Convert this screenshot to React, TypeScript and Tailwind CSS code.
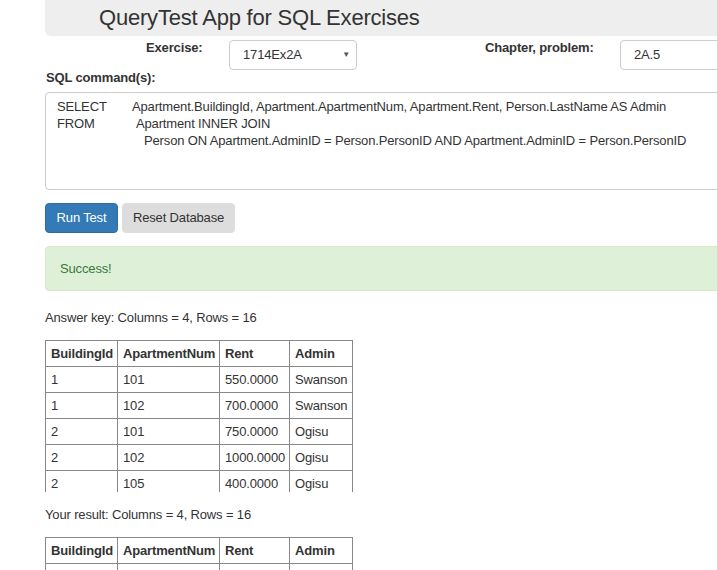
import React from 'react'

type Row = [string, string, string, string]

const answerRows: Row[] = [
  ['1', '101', '550.0000', 'Swanson'],
  ['1', '102', '700.0000', 'Swanson'],
  ['2', '101', '750.0000', 'Ogisu'],
  ['2', '102', '1000.0000', 'Ogisu'],
  ['2', '105', '400.0000', 'Ogisu'],
  ['2', '201', '800.0000', 'Ogisu'],
]

const headers = ['BuildingId', 'ApartmentNum', 'Rent', 'Admin']

function ResultTable({ rows, height }: { rows: Row[]; height: string }) {
  return (
    <div className={`overflow-hidden ${height}`}>
      <table className="border-collapse table-fixed w-[307px] leading-[16px]">
        <colgroup>
          <col className="w-[72px]" />
          <col className="w-[102px]" />
          <col className="w-[70px]" />
          <col className="w-[63px]" />
        </colgroup>
        <thead>
          <tr className="h-[26px]">
            {headers.map((h) => (
              <th key={h} className="border border-[#888] px-[5px] text-left font-bold whitespace-nowrap">
                {h}
              </th>
            ))}
          </tr>
        </thead>
        <tbody>
          {rows.map((r, i) => (
            <tr key={i} className="h-[26px]">
              {r.map((c, j) => (
                <td key={j} className="border border-[#888] px-[5px] whitespace-nowrap">
                  {c}
                </td>
              ))}
            </tr>
          ))}
        </tbody>
      </table>
    </div>
  )
}

export default function App() {
  return (
    <div
      className="w-[717px] h-[570px] overflow-hidden bg-white text-[#333] text-[13px] tracking-[-0.15px]"
      style={{ fontFamily: '"Liberation Sans", Arial, sans-serif' }}
    >
      <div className="w-[780px] pl-[45px]">
        <div className="h-[36px] bg-[#eee] rounded-bl-[6px] pl-[54px] flex items-center">
          <h1 className="text-[22px] leading-none font-normal tracking-[-0.2px]">QueryTest App for SQL Exercises</h1>
        </div>

        <div className="flex items-start mt-[4px] h-[30px]">
          <label className="ml-[101px] w-[83px] font-bold leading-[16px]">Exercise:</label>
          <div className="w-[128px] h-[30px] border border-[#ccc] rounded-[4px] flex items-center justify-between pl-[13px] pr-[6px]">
            <span>1714Ex2A</span>
            <span className="text-[8px] text-[#555]">▼</span>
          </div>
          <label className="ml-[128px] w-[135px] font-bold leading-[16px]">Chapter, problem:</label>
          <div className="w-[140px] h-[30px] border border-[#ccc] rounded-[4px] flex items-center pl-[13px]">
            <span>2A.5</span>
          </div>
        </div>

        <div className="font-bold leading-5 mt-[-2px] pl-[1px]">SQL command(s):</div>

        <div className="mt-[4px] h-[98px] border border-[#ccc] rounded-[4px] pt-[5px] pl-[11px] leading-[17px]">
          <div className="whitespace-nowrap">
            <span className="inline-block w-[75px]">SELECT</span>
            Apartment.BuildingId, Apartment.ApartmentNum, Apartment.Rent, Person.LastName AS Admin
          </div>
          <div className="whitespace-nowrap">
            <span className="inline-block w-[79px]">FROM</span>
            Apartment INNER JOIN
          </div>
          <div className="whitespace-nowrap pl-[87px]">
            Person ON Apartment.AdminID = Person.PersonID AND Apartment.AdminID = Person.PersonID
          </div>
        </div>

        <div className="flex gap-[4px] mt-[13px]">
          <button className="h-[30px] w-[73px] rounded-[4px] bg-[#337ab7] border border-[#2e6da4] text-white">
            Run Test
          </button>
          <button className="h-[30px] w-[113px] rounded-[4px] bg-[#ddd] border border-[#ddd] text-[#333]">
            Reset Database
          </button>
        </div>

        <div className="mt-[13px] h-[45px] bg-[#dff0d8] border border-[#d6e9c6] rounded-[4px] flex items-center pl-[14px] text-[#3c763d]">
          Success!
        </div>

        <p className="mt-[17px] leading-5">Answer key: Columns = 4, Rows = 16</p>
        <div className="mt-[12px]">
          <ResultTable rows={answerRows} height="h-[152px]" />
        </div>

        <p className="mt-[13px] leading-5">Your result: Columns = 4, Rows = 16</p>
        <div className="mt-[12px]">
          <ResultTable rows={answerRows} height="h-[152px]" />
        </div>
      </div>
    </div>
  )
}
